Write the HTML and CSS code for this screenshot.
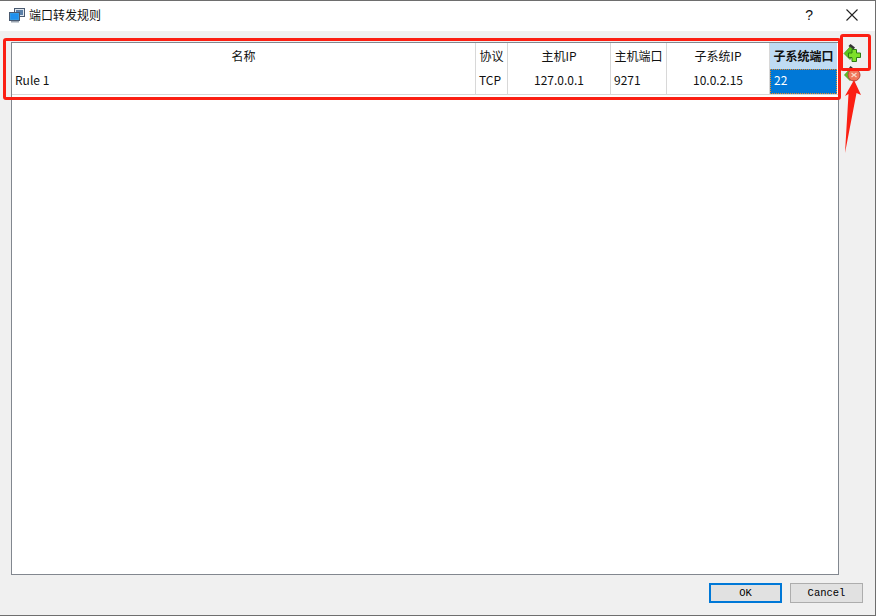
FILE: index.html
```html
<!DOCTYPE html>
<html lang="zh">
<head>
<meta charset="utf-8">
<title>端口转发规则</title>
<link rel="stylesheet" href="styles.css">
</head>
<body>
<div class="window">
  <header class="titlebar">
    <svg class="app-icon" width="18" height="18" viewBox="0 0 18 18">
      <rect x="6.500" y="2.500" width="10" height="8" fill="#dfe6ee" stroke="#4a5a70"/>
      <rect x="8" y="4" width="7" height="5" fill="#5a7fa8"/>
      <rect x="1.500" y="6.500" width="10" height="8" fill="#2f9be8" stroke="#4a5a70"/>
      <rect x="3" y="8" width="7" height="5" fill="#1e90ee"/>
      <rect x="3" y="15" width="8" height="1.500" fill="#9aa4b0"/>
    </svg>
    <span class="title">端口转发规则</span>
    <span class="help">?</span>
    <svg class="close" width="12" height="12" viewBox="0 0 12 12">
      <path d="M.5.5l11 11M11.500.5l-11 11" stroke="#222" stroke-width="1.100" fill="none"/>
    </svg>
  </header>
  <main class="content">
    <div class="middle">
      <div class="table">
        <div class="row head">
          <div class="cell c1">名称</div>
          <div class="cell c2">协议</div>
          <div class="cell c3">主机IP</div>
          <div class="cell c4">主机端口</div>
          <div class="cell c5">子系统IP</div>
          <div class="cell c6 active">子系统端口</div>
        </div>
        <div class="row body">
          <div class="cell c1 left">Rule 1</div>
          <div class="cell c2 left">TCP</div>
          <div class="cell c3">127.0.0.1</div>
          <div class="cell c4 left">9271</div>
          <div class="cell c5">10.0.2.15</div>
          <div class="cell c6 left selected">22</div>
        </div>
      </div>
      <div class="tools">
        <svg class="tool" width="20" height="20" viewBox="0 0 20 20">
          <path d="M7.500 1L12 4.500 10 7 5.500 3z" fill="#333"/>
          <path d="M1 10.500L7 4l6 4.500-6 8z" fill="#5cc81c" stroke="#4d8c1e" stroke-width=".8"/>
          <path d="M9 6.500h4.500v3.500h4v4.500h-4v4h-4.500v-4h-3.500v-4.500h3.500z" fill="#7ee02a" stroke="#2f7d14"/>
        </svg>
        <svg class="tool" width="20" height="20" viewBox="0 0 20 20">
          <path d="M7.500 0L10 2 8.500 4 6 2z" fill="#333"/>
          <path d="M1.500 9L7.500 2.500l5 4-5.500 8z" fill="#5cc81c" stroke="#4d8c1e" stroke-width=".8"/>
          <circle cx="11" cy="9" r="6" fill="#f0765a" stroke="#b5483a"/>
          <path d="M8.500 7l5 4M13.500 7l-5 4" stroke="#f8d8c8" stroke-width="1.300"/>
        </svg>
      </div>
    </div>
    <footer class="buttons">
      <button class="btn primary">OK</button>
      <button class="btn">Cancel</button>
    </footer>
  </main>
  <div class="mark mark-row"></div>
  <div class="mark mark-tool"></div>
  <svg class="arrow" width="20" height="74" viewBox="0 0 20 74">
    <path d="M9 0L16 15 11.500 13 0 73 3.500 14 0 16z" fill="#fb1f13"/>
  </svg>
</div>
</body>
</html>
```
FILE: styles.css
```css
* { box-sizing: border-box; }
html, body { margin: 0; padding: 0; }
body {
  width: 876px;
  height: 616px;
  overflow: hidden;
  font-family: "Noto Sans CJK SC", "Noto Sans", sans-serif;
  font-size: 12px;
  color: #111;
}
.window {
  position: relative;
  width: 876px;
  height: 616px;
  display: flex;
  flex-direction: column;
  background: #f0f0f0;
  border: 1px solid #6e6e6e;
  border-left: 0;
}
.titlebar {
  height: 30px;
  flex: none;
  background: #fff;
  display: flex;
  align-items: center;
  padding: 0 17px 3px 8px;
}
.app-icon { flex: none; }
.title { margin-left: 3px; font-size: 12px; }
.help { margin-left: auto; margin-right: 33px; font-size: 14px; font-family: "Liberation Sans", sans-serif; }
.content {
  flex: 1;
  min-height: 0;
  display: flex;
  flex-direction: column;
  padding: 11px 0 0 11px;
}
.middle { flex: 1; min-height: 0; display: flex; }
.table {
  width: 828px;
  height: 533px;
  background: #fff;
  border: 1px solid #82878f;
  flex: none;
}
.row { display: flex; }
.head { height: 26px; }
.body { border-bottom: 1px solid #d8d8d8; height: 26px; }
.cell {
  height: 100%;
  display: flex;
  align-items: center;
  justify-content: center;
  border-right: 1px solid #d8d8d8;
  white-space: nowrap;
  line-height: 1;
}
.body .cell { padding-bottom: 4px; }
.left { justify-content: flex-start; padding-left: 3px; }
.c1 { width: 464px; }
.c2 { width: 32px; }
.c3 { width: 103px; }
.c4 { width: 56px; }
.c5 { width: 103px; }
.c6 { width: 67px; border-right: 0; }
.active { background: #bfdbf3; font-weight: 700; }
.body .selected {
  background: #0078d7;
  color: #fff;
  border: 1px dotted #f08a24;
  padding-bottom: 4px;
}
.tools {
  display: flex;
  flex-direction: column;
  gap: 3px;
  padding: 1px 0 0 4px;
}
.tool { display: block; }
.buttons {
  flex: none;
  height: 40px;
  display: flex;
  justify-content: flex-end;
  align-items: flex-start;
  gap: 8px;
  padding: 8px 12px 0 0;
}
.btn {
  width: 73px;
  height: 20px;
  padding: 0;
  font-family: "Liberation Mono", monospace;
  font-size: 10.5px;
  color: #000;
  background: #e1e1e1;
  border: 1px solid #adadad;
}
.primary { border: 2px solid #0078d7; }
.mark {
  position: absolute;
  border: 3px solid #fb1f13;
  border-radius: 3px;
}
.mark-row { left: 3px; top: 37px; width: 838px; height: 62px; }
.mark-tool { left: 840px; top: 33px; width: 31px; height: 37px; }
.arrow { position: absolute; left: 845px; top: 79px; }
```
